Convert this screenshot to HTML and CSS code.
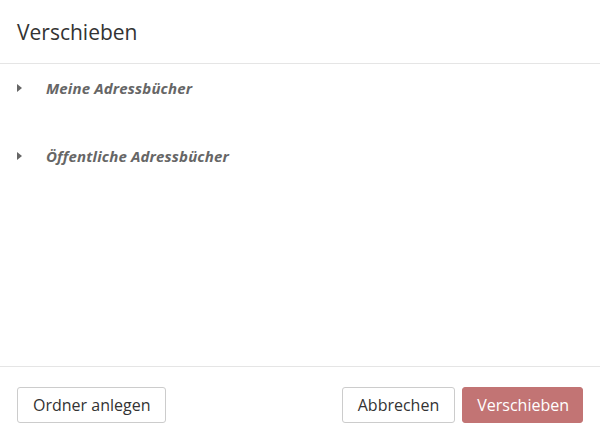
FILE: index.html
```html
<!DOCTYPE html>
<html lang="de">
<head>
    <meta charset="UTF-8">
    <meta name="viewport" content="width=device-width, initial-scale=1.0">
    <title>Verschieben</title>
    <link rel="stylesheet" href="styles.css">
</head>
<body>
    <div class="dialog">
        <div class="dialog-header">
            <h1>Verschieben</h1>
        </div>

        <div class="dialog-body">
            <ul class="tree">
                <li class="tree-node">
                    <span class="caret"></span>
                    <span class="tree-label">Meine Adressbücher</span>
                </li>
                <li class="tree-node">
                    <span class="caret"></span>
                    <span class="tree-label">Öffentliche Adressbücher</span>
                </li>
            </ul>
        </div>

        <div class="dialog-footer">
            <button class="btn">Ordner anlegen</button>
            <div class="footer-right">
                <button class="btn">Abbrechen</button>
                <button class="btn btn-primary">Verschieben</button>
            </div>
        </div>
    </div>
</body>
</html>
```

FILE: styles.css
```css
body {
    font-family: "Open Sans", Arial, sans-serif;
    background-color: #fff;
    color: #333;
    margin: 0;
    padding: 0;
}

.dialog {
    width: 600px;
    height: 438px;
    display: flex;
    flex-direction: column;
}

.dialog-header {
    height: 63px;
    border-bottom: 1px solid #e5e5e5;
    padding: 0 17px;
    display: flex;
    align-items: center;
}

.dialog-header h1 {
    margin: 0;
    font-size: 21px;
    font-weight: normal;
    color: #333;
}

.dialog-body {
    flex-grow: 1;
    padding: 12px 0 0 17px;
}

.tree {
    list-style: none;
    margin: 0;
    padding: 0;
}

.tree-node {
    display: flex;
    align-items: center;
    height: 24px;
    margin-bottom: 44px;
}

.caret {
    width: 0;
    height: 0;
    border-top: 4px solid transparent;
    border-bottom: 4px solid transparent;
    border-left: 5px solid #666;
    margin-right: 24px;
}

.tree-label {
    font-size: 15px;
    font-weight: bold;
    font-style: italic;
    letter-spacing: 0.15px;
    color: #666;
}

.dialog-footer {
    height: 66px;
    padding-top: 5px;
    border-top: 1px solid #e5e5e5;
    padding-left: 17px;
    padding-right: 17px;
    display: flex;
    align-items: center;
    justify-content: space-between;
}

.footer-right {
    display: flex;
    gap: 7px;
}

.btn {
    font-family: inherit;
    font-size: 16px;
    color: #333;
    background-color: #fff;
    border: 1px solid #ccc;
    border-radius: 3px;
    height: 36px;
    padding: 0 15px;
    cursor: pointer;
}

.btn-primary {
    background-color: #c27474;
    border-color: #c27474;
    color: #fff;
    padding: 0 13px 0 14px;
}
```
